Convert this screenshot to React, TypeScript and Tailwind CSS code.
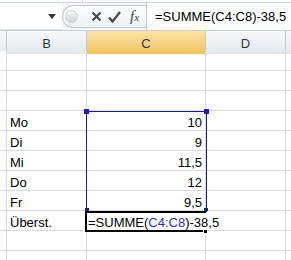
import React from "react";

const font = "font-['Liberation_Sans',Arial,sans-serif]";

const rows: { label?: string; value?: string }[] = [
  {},
  {},
  {},
  { label: "Mo", value: "10" },
  { label: "Di", value: "9" },
  { label: "Mi", value: "11,5" },
  { label: "Do", value: "12" },
  { label: "Fr", value: "9,5" },
  { label: "Überst." },
  {},
  {},
];

const Formula = () => (
  <>
    =SUMME(<span className="text-[#3333a8]">C4:C8</span>)-38,5
  </>
);

const Toolbar = () => (
  <div className="h-[31px] flex flex-col bg-[#f4f6f9] border-b border-[#c9cfd7]">
    <div className="h-[3px] flex bg-[#fbfcfd] border-b border-[#cfd4db]">
      <div className="w-[83px] border-r border-[#cfd4db]" />
    </div>
    <div className="flex-1 flex">
      <div className="w-[62px] bg-white flex items-center justify-end pr-[6px] border-b border-[#dde1e6]">
        <svg width="8" height="5" viewBox="0 0 8 5">
          <path d="M0 0h8L4 5z" fill="#333" />
        </svg>
      </div>
      <div className="w-[84px] flex items-center">
        <div className="h-[23px] flex-1 flex items-center rounded-l-full border border-r-0 border-[#c3c9d1] bg-linear-to-b from-white to-[#eef1f5]">
          <div className="w-[13px] h-[13px] ml-[2px] rounded-full border border-[#cdd2d8] bg-linear-to-b from-[#f7f8fa] to-[#cfd4db]" />
          <svg className="ml-[13px]" width="11" height="11" viewBox="0 0 11 11">
            <path d="M1.5 1.5l8 8M9.5 1.5l-8 8" stroke="#454a52" strokeWidth="2.2" />
          </svg>
          <svg className="ml-[6px]" width="13" height="12" viewBox="0 0 13 12">
            <path d="M1 6.5l3.5 4L12 1" stroke="#454a52" strokeWidth="2.3" fill="none" />
          </svg>
          <span className="ml-[9px] font-['Liberation_Serif',serif] italic text-[15px] leading-none text-[#3a4350]">
            f<span className="text-[11px]">x</span>
          </span>
        </div>
      </div>
      <div className={`flex-1 bg-white border-l border-[#c3c9d1] pl-[8px] flex items-center text-[13px] text-black ${font}`}>
        =SUMME(C4:C8)-38,5
      </div>
    </div>
  </div>
);

const Header = () => (
  <div className={`h-[20px] grid grid-cols-[7px_80px_119px_80px_1fr] border-b border-[#a9b2be] text-[13px] text-[#2f3a4a] pt-0 ${font}`}>
    <div className="bg-linear-to-b from-[#f7f8fa] to-[#e4e8ed] border-r border-[#c3c9d1]" />
    <div className="bg-linear-to-b from-[#f7f8fa] to-[#e4e8ed] border-r border-[#c3c9d1] flex items-center justify-center pt-[3px]">B</div>
    <div className="bg-linear-to-b from-[#fbe3a6] to-[#f1c25f] border-r border-[#c3c9d1] flex items-center justify-center pt-[3px]">C</div>
    <div className="bg-linear-to-b from-[#f7f8fa] to-[#e4e8ed] border-r border-[#c3c9d1] flex items-center justify-center pt-[3px]">D</div>
    <div className="bg-linear-to-b from-[#f7f8fa] to-[#e4e8ed]" />
  </div>
);

const Grid = () => (
  <div className={`relative text-[13px] leading-[15px] text-black ${font}`}>
    {rows.map((r, i) => (
      <div key={i} className="h-[20px] grid grid-cols-[7px_80px_119px_80px_1fr]">
        <div className="border-r border-b border-[#d9dbde] bg-white" />
        <div className="border-r border-b border-[#d9dbde] pl-[3px] flex items-end">{r.label}</div>
        <div className="border-r border-b border-[#d9dbde] pr-[3px] flex items-end justify-end">{r.value}</div>
        <div className="border-r border-b border-[#d9dbde]" />
        <div className="border-b border-[#d9dbde]" />
      </div>
    ))}

    {/* range C4:C8 */}
    <div className="absolute left-[86px] top-[60px] w-[121px] h-[101px] border-[1.5px] border-[#22206e]" />
    <div className="absolute left-[84px] top-[58px] w-[5px] h-[5px] bg-[#1f1fc0]" />
    <div className="absolute left-[204px] top-[58px] w-[5px] h-[5px] bg-[#1f1fc0]" />
    <div className="absolute left-[85px] top-[157px] w-[4px] h-[3px] bg-[#22206e]" />
    <div className="absolute left-[204px] top-[157px] w-[4px] h-[3px] bg-[#22206e]" />

    {/* active cell C9 in edit mode */}
    <div className="absolute left-[87px] top-[162px] w-[131px] h-[17px] bg-white flex items-end pl-[1px] whitespace-nowrap">
      <Formula />
      <span className="ml-[1px] mb-px w-px h-[15px] bg-black" />
    </div>
    <div className="absolute left-[85px] top-[160px] w-[121px] h-[21px] border-2 border-r-0 border-black" />
    <div className="absolute left-[203px] top-[178px] w-[5px] h-[5px] bg-black border border-white" />
  </div>
);

export default function App() {
  return (
    <div className="w-[291px] h-[260px] overflow-hidden bg-white">
      <Toolbar />
      <Header />
      <Grid />
    </div>
  );
}
